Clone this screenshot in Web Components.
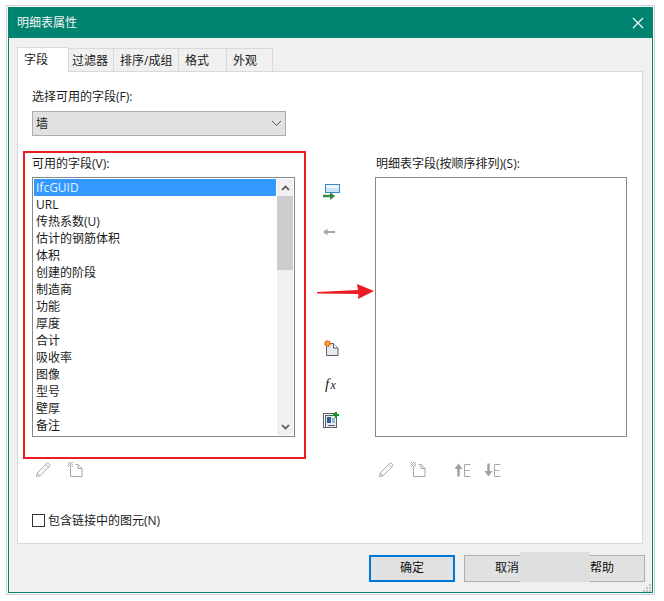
<!doctype html>
<html lang="zh"><head><meta charset="utf-8"><style>
html,body{margin:0;padding:0;background:#fff}
body{width:664px;height:601px;overflow:hidden;font:12px/17px "Open Sans","Noto Sans CJK SC",sans-serif;color:#1a1a1a}
</style></head><body>
<x-dialog heading="明细表属性">
  <x-tabs slot="tabs"></x-tabs>
  <x-fields></x-fields>
  <x-btn slot="footer" primary>确定</x-btn>
  <x-btn slot="footer">取消</x-btn>
  <x-btn slot="footer">帮助</x-btn>
</x-dialog>
<script>
class Base extends HTMLElement{
  render(html){ (this.shadowRoot||this.attachShadow({mode:'open'})).innerHTML=html; }
}
customElements.define('x-dialog',class extends Base{connectedCallback(){this.render(`<style>
:host{display:block;box-sizing:border-box;position:relative;margin:5px 0 0 6px;width:649px;height:590px;border:1px solid #d2d2d2;background:#fff;padding:1px}
.win{box-sizing:border-box;height:100%;border:1px solid #00836f;background:#f0f0f0;display:flex;flex-direction:column}
.title{flex:none;height:31px;background:#00836f;color:#f4f4f4;display:flex;align-items:center;justify-content:space-between;padding:0 9px 0 9px;margin:-1px -1px 0;font-size:12px}
.title svg{display:block}
.body{flex:none;padding:9px 0 0 8px;width:627px}
.foot{flex:none;display:flex;gap:9px;padding:11px 0 0 360px}
.patch{position:absolute;left:513px;top:546px;width:70px;height:30px;background:#dedede}
.grip{position:absolute;left:636px;top:578px}
</style><div class="win"><div class="title"><span>${this.getAttribute('heading')}</span>
<svg width="12" height="12" viewBox="0 0 12 12"><path d="M1 1L11 11M11 1L1 11" stroke="#fff" stroke-width="1.1" fill="none"/></svg></div>
<div class="body"><slot name="tabs"></slot><slot></slot></div>
<div class="foot"><slot name="footer"></slot></div></div>
<div class="patch"></div>
<svg class="grip" width="9" height="9" viewBox="0 0 9 9" fill="#c4c4c4"><rect x="6" y="0" width="2" height="2"/><rect x="3" y="3" width="2" height="2"/><rect x="6" y="3" width="2" height="2"/><rect x="0" y="6" width="2" height="2"/><rect x="3" y="6" width="2" height="2"/><rect x="6" y="6" width="2" height="2"/></svg>`)}});
customElements.define('x-tabs',class extends Base{connectedCallback(){
const t=[['字段',52,7],['过滤器',45,3],['排序/成组',65,6],['格式',48,6],['外观',46,6]];
this.render(`<style>
:host{display:flex;align-items:flex-end;height:25px;margin-bottom:-1px;position:relative;z-index:1}
.t{box-sizing:border-box;height:23px;margin-bottom:1px;background:#f0f0f0;border:1px solid #d9d9d9;border-left:0;border-bottom:0;line-height:23px;white-space:nowrap}
.on{height:25px;margin:0;background:#fff;border-left:1px solid #d9d9d9;line-height:24px}
</style>`+t.map((x,i)=>`<div class="t${i?'':' on'}" style="width:${x[1]}px;padding-left:${x[2]-(i?0:1)}px">${x[0]}</div>`).join(''))}});
customElements.define('x-btn',class extends Base{connectedCallback(){this.render(`<style>
:host{display:block;box-sizing:border-box;width:86px;height:27px;background:#e1e1e1;border:1px solid #adadad;text-align:center;line-height:24px;font-size:12px;color:#111}
:host([primary]){border:2px solid #0078d7;line-height:22px}
</style><slot></slot>`)}});
customElements.define('x-listbox',class extends Base{connectedCallback(){
const items=(this.getAttribute('items')||'').split('|').filter(Boolean);
const bar=items.length?`<div class="bar"><div class="b"><svg width="9" height="6" viewBox="0 0 9 6"><path d="M1 5L4.5 1.5L8 5" fill="none" stroke="#505050" stroke-width="1.6"/></svg></div><div class="thumb"></div><div class="sp"></div><div class="b"><svg width="9" height="6" viewBox="0 0 9 6"><path d="M1 1L4.5 4.5L8 1" fill="none" stroke="#505050" stroke-width="1.6"/></svg></div></div>`:'';
this.render(`<style>
:host{display:flex;box-sizing:border-box;height:260px;border:1px solid #828790;background:#fff;padding:1px;overflow:hidden}
.l{flex:1;min-width:0;overflow:hidden}
.i{height:17px;line-height:17px;padding-left:2px;white-space:nowrap;overflow:hidden}
.i.s{background:#3399ff;color:#e8f2ff;margin-right:1px}
.bar{flex:none;width:16px;display:flex;flex-direction:column;background:#f0f0f0}
.b{flex:none;height:17px;display:flex;align-items:center;justify-content:center}
.thumb{flex:none;height:74px;background:#cdcdcd}.sp{flex:1}
</style><div class="l">${items.map((x,i)=>`<div class="i${i?'':' s'}">${x}</div>`).join('')}</div>${bar}`)}});
const HATCH=[[2,1],[4,1],[6,1],[3,2],[5,2],[2,3],[4,3],[6,3],[3,4],[5,4],[2,5],[4,5],[6,5]].map(p=>`<rect x="${p[0]}" y="${p[1]}" width="1" height="1" fill="#a8a8a8"/>`).join('');
const ICON={
add:`<rect x="2.5" y=".5" width="14" height="8" fill="#cfe4f7" stroke="#3b86c8"/><rect x="3" y="1" width="13" height="3" fill="#eef6fd"/><path d="M0 12h8" stroke="#2f8a3e" stroke-width="2.4"/><path d="M7 8l5 4-5 4z" fill="#2f8a3e"/>`,
rem:`<path d="M3 8h9" stroke="#a8a8a8" stroke-width="2"/><path d="M4.5 4.5L0 8l4.500 3.500z" fill="#a8a8a8"/>`,
newp:`<path d="M3.500 3.500h7l4.500 4.500v7.500H3.500z" fill="#e6e9ef" stroke="#59606a"/><path d="M10.500 3.500V8H15" fill="#fff" stroke="#59606a"/><circle cx="4.500" cy="3.500" r="2.600" fill="#f7b21a" stroke="#e0330f" stroke-width="1.3" stroke-dasharray="1.4 .8"/>`,
fx:`<text x="2" y="13" font-family="Liberation Serif,serif" font-style="italic" font-size="15" fill="#222">f</text><text x="7.500" y="13" font-family="Liberation Serif,serif" font-style="italic" font-size="12" fill="#222">x</text>`,
comb:`<rect x=".5" y="1.500" width="11" height="14" fill="#fff" stroke="#59606a"/><rect x="2.500" y="3.500" width="11" height="12" fill="#e8ebf0" stroke="#59606a"/><rect x="4" y="5" width="4" height="6" fill="#2a5f9e"/><rect x="9" y="6" width="3" height="5" fill="#9db3cc"/><path d="M5 13.500h7" stroke="#59606a"/><path d="M10 3h6M13 0v6" stroke="#0a9a1e" stroke-width="2.2"/>`,
pencil:`<path d="M1.500 15.500l.8-3.600L12.500 1.700l2.800 2.800L5.100 14.700zM2.300 11.900l2.800 2.800M10.800 3.400l2.800 2.800" fill="none" stroke="#a6a6a6"/>`,
newg:`<path d="M4.500 6v9.500h11.500V7.500L12 3.500H9.500M12 3.500v4h4" fill="none" stroke="#a6a6a6"/>`+HATCH,
up:`<path d="M4.500 15.500V7" stroke="#a0a0a0" stroke-width="2.4"/><path d="M.5 8L4.500 2.500 8.500 8z" fill="#a0a0a0"/><path d="M16.500 3.500H10.500v12h6M10.500 9.500h5" fill="none" stroke="#a6a6a6"/>`,
down:`<path d="M4.500 2.500v8" stroke="#a0a0a0" stroke-width="2.4"/><path d="M.5 10L4.500 15.500 8.500 10z" fill="#a0a0a0"/><path d="M16.500 3.500H10.500v12h6M10.500 9.500h5" fill="none" stroke="#a6a6a6"/>`};
customElements.define('x-icon',class extends Base{connectedCallback(){this.render(`<style>:host{display:block;width:17px;height:17px;flex:none}svg{display:block;overflow:visible}</style><svg width="17" height="17" viewBox="0 0 17 17">${ICON[this.getAttribute('name')]}</svg>`)}});
customElements.define('x-select',class extends Base{connectedCallback(){this.render(`<style>
:host{display:flex;box-sizing:border-box;width:254px;height:25px;align-items:center;justify-content:space-between;background:#e1e1e1;border:1px solid #adadad;padding:0 3px 0 3px}
svg{display:block}
</style><slot></slot><svg width="11" height="7" viewBox="0 0 11 7"><path d="M1 1l4.500 4.500L10 1" fill="none" stroke="#555" stroke-width="1"/></svg>`)}});
customElements.define('x-fields',class extends Base{connectedCallback(){
const items='IfcGUID|URL|传热系数(U)|估计的钢筋体积|体积|创建的阶段|制造商|功能|厚度|合计|吸收率|图像|型号|壁厚|备注';
this.render(`<style>
:host{display:block;box-sizing:border-box;width:626px;height:473px;background:#fff;border:1px solid #d9d9d9;position:relative;padding:16px 0 0 5px}
.lb{height:17px;line-height:17px;white-space:nowrap}
.sel{margin-left:9px}
.sel x-select{margin-top:6px}
.cols{display:grid;grid-template-columns:283px 69px 252px;grid-template-rows:308px auto;margin-top:15px}
.red{box-sizing:border-box;border:2px solid #ed1c24;padding:2px 0 0 7px}
.red x-listbox{width:263px;margin-top:5px}
.right{padding:4px 0 0}
.right .lb{padding-left:1px}
.right x-listbox{width:252px;margin-top:5px}
.mid{display:flex;flex-direction:column;align-items:flex-start;padding:33px 0 0 17px}
.tools{display:flex;gap:14px;padding:2px 0 0 12px}
.tools.r{padding-left:3px}
.chk{display:flex;align-items:center;gap:3px;margin:34px 0 0 9px;height:17px}
.box{width:11px;height:11px;border:1px solid #333;background:#fff}
.arrow{position:absolute;left:299px;top:212px}
</style>
<div class="sel"><div class="lb">选择可用的字段(F):</div><x-select>墙</x-select></div>
<div class="cols">
  <div class="red"><div class="lb">可用的字段(V):</div><x-listbox items="${items}"></x-listbox></div>
  <div class="mid">
    <x-icon name="add"></x-icon><x-icon name="rem" style="margin-top:23px"></x-icon>
    <x-icon name="newp" style="margin-top:99px"></x-icon><x-icon name="fx" style="margin-top:19px"></x-icon><x-icon name="comb" style="margin-top:19px"></x-icon>
  </div>
  <div class="right"><div class="lb">明细表字段(按顺序排列)(S):</div><x-listbox></x-listbox></div>
  <div class="tools"><x-icon name="pencil"></x-icon><x-icon name="newg"></x-icon></div>
  <div></div>
  <div class="tools r"><x-icon name="pencil"></x-icon><x-icon name="newg"></x-icon><x-icon name="up" style="margin-left:14px"></x-icon><x-icon name="down" style="margin-left:-1px"></x-icon></div>
</div>
<div class="chk"><div class="box"></div><span>包含链接中的图元(N)</span></div>
<svg class="arrow" width="58" height="15" viewBox="0 0 58 15"><path d="M0 8L41 6 40 0 57 7 41 15 41.500 10 0 9.500z" fill="#ed1c24"/></svg>`)}});
</script>
</body></html>
